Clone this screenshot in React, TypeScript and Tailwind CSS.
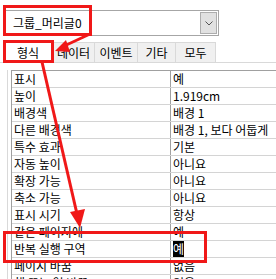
import React from "react";

const rows: [string, string][] = [
  ["표시", "예"],
  ["높이", "1.919cm"],
  ["배경색", "배경 1"],
  ["다른 배경색", "배경 1, 보다 어둡게"],
  ["특수 효과", "기본"],
  ["자동 높이", "아니요"],
  ["확장 가능", "아니요"],
  ["축소 가능", "아니요"],
  ["표시 시기", "항상"],
  ["같은 페이지에", "예"],
  ["반복 실행 구역", "예"],
  ["페이지 바꿈", "없음"],
  ["행 또는 열 바꿈", "없음"],
];

const tabs = ["형식", "데이터", "이벤트", "기타", "모두"];
const tabW = [50, 42, 43, 38, 40];

export default function App() {
  const font = { fontFamily: '"Noto Sans CJK KR", "Noto Sans", sans-serif' };
  return (
    <div
      className="relative w-[276px] h-[279px] overflow-hidden bg-white text-[12px] text-black"
      style={font}
    >
      {/* combo */}
      <div className="pt-[10px] pl-[3px]">
        <div className="flex h-[26px] w-[216px] items-center border border-[#a6a6a6] bg-white">
          <div className="flex-1 pl-[9px] leading-none">그룹_머리글0</div>
          <div className="mr-[1px] flex h-[22px] w-[17px] items-center justify-center border border-[#adadad] bg-[#e1e1e1]">
            <svg width="8" height="5" viewBox="0 0 8 5">
              <path d="M0.5 0.5 L4 4 L7.5 0.5" fill="none" stroke="#555" strokeWidth="1" />
            </svg>
          </div>
        </div>
      </div>
      {/* tabs */}
      <div className="mt-[6px] flex h-[21px] border-b border-[#d9d9d9] pl-[3px]">
        {tabs.map((t, i) => (
          <div
            key={t}
            className={
              "flex items-center justify-center border-t border-r border-[#d9d9d9] leading-none " +
              (i === 0 ? "bg-white border-l" : "bg-[#f0f0f0]")
            }
            style={{ width: tabW[i] }}
          >
            {t}
          </div>
        ))}
      </div>
      {/* grid */}
      <div className="mt-[7px] flex">
        <div className="w-[7px]" />
        <div className="w-[4px] border-l border-[#d9d9d9]" />
        <div className="flex-1 border-t border-l border-[#a0a0a0]">
          {rows.map(([k, v], i) => (
            <div key={k} className="flex h-[17px] border-b border-[#d4d4d4]">
              <div className="w-[159px] shrink-0 border-r border-[#a0a0a0] pl-[2px] leading-[16px] whitespace-nowrap overflow-hidden">
                {k}
              </div>
              <div className="flex-1 overflow-hidden whitespace-nowrap pl-[2px] leading-[16px]">
                {i === 10 ? (
                  <span className="bg-black text-white">{v}</span>
                ) : (
                  v
                )}
              </div>
            </div>
          ))}
        </div>
      </div>

      {/* annotations */}
      <div className="absolute left-[3px] top-[5px] h-[31px] w-[89px] border-[3px] border-[#f01818]" />
      <div className="absolute left-[3px] top-[40px] h-[23px] w-[51px] border-[3px] border-[#f01818]" />
      <div className="absolute left-[3px] top-[231px] h-[32px] w-[204px] border-[3px] border-[#f01818]" />
      <svg className="absolute left-0 top-0" width="276" height="279" viewBox="0 0 276 279">
        <line x1="90" y1="34" x2="62" y2="47" stroke="#f01818" strokeWidth="3" />
        <polygon points="55,51 66,40 70,52" fill="#f01818" />
        <line x1="42" y1="62" x2="77" y2="214" stroke="#f01818" strokeWidth="3" />
        <polygon points="80,228 70,212 85,209" fill="#f01818" />
      </svg>
    </div>
  );
}
